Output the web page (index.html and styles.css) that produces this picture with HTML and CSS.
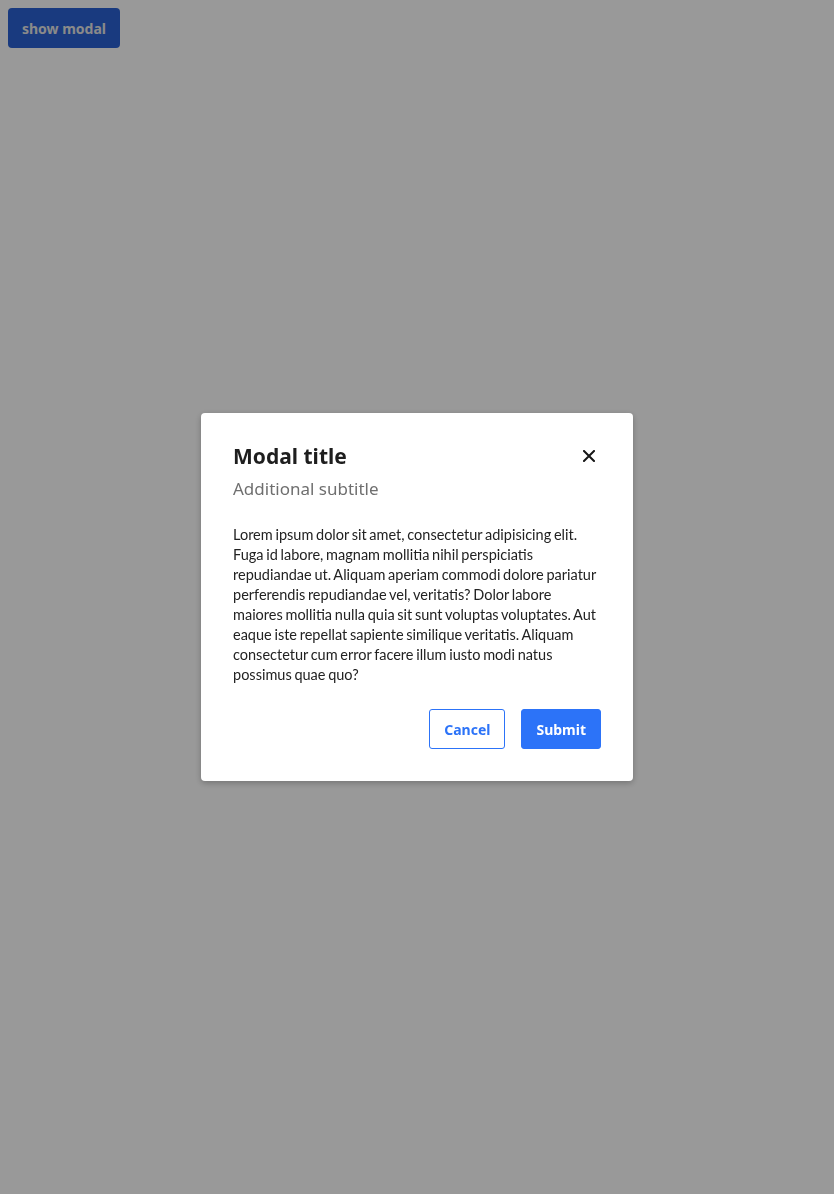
FILE: index.html
```html
<!DOCTYPE html>
<html>
<head>
<meta charset="utf-8">
<link rel="stylesheet" href="styles.css">
</head>
<body>
<button class="show-btn">show modal</button>
<div class="overlay">
  <div class="modal">
    <div class="modal-header">
      <div class="titles">
        <h2 class="modal-title">Modal title</h2>
        <p class="modal-subtitle">Additional subtitle</p>
      </div>
      <button class="close-btn" aria-label="close">
        <svg width="12" height="12" viewBox="0 0 12 12"><path d="M1 1L11 11M11 1L1 11" stroke="#161616" stroke-width="2" stroke-linecap="square"/></svg>
      </button>
    </div>
    <p class="modal-body">Lorem ipsum dolor sit amet, consectetur adipisicing elit. Fuga id labore, magnam mollitia nihil perspiciatis repudiandae ut. Aliquam aperiam commodi dolore pariatur perferendis repudiandae vel, veritatis? Dolor labore maiores mollitia nulla quia sit sunt voluptas voluptates. Aut eaque iste repellat sapiente similique veritatis. Aliquam consectetur cum error facere illum iusto modi natus possimus quae quo?</p>
    <div class="modal-footer">
      <button class="btn btn-outline">Cancel</button>
      <button class="btn btn-primary">Submit</button>
    </div>
  </div>
</div>
</body>
</html>
```
FILE: styles.css
```css
html, body {
  margin: 0;
  padding: 0;
}
body {
  background: #ffffff;
  font-family: "Noto Sans", "DejaVu Sans", sans-serif;
  padding: 8px;
}
.show-btn {
  width: 112px;
  height: 40px;
  border: none;
  border-radius: 4px;
  background: #2a62d4;
  color: #e6e6e6;
  font-family: inherit;
  font-weight: 700;
  font-size: 14px;
}
.overlay {
  position: fixed;
  inset: 0;
  background: rgba(0, 0, 0, 0.4);
  display: flex;
  align-items: center;
  justify-content: center;
}
.modal {
  width: 432px;
  box-sizing: border-box;
  padding: 29px 32px 32px;
  background: #ffffff;
  border-radius: 4px;
  box-shadow: 0 2px 6px rgba(0, 0, 0, 0.25);
}
.modal-header {
  display: flex;
  justify-content: space-between;
  align-items: flex-start;
}
.modal-title {
  margin: 0;
  font-size: 21px;
  line-height: 28px;
  font-weight: 700;
  color: #1e1e1e;
}
.modal-subtitle {
  margin: 7px 0 0;
  font-size: 17px;
  line-height: 24px;
  color: #6f6f6f;
}
.close-btn {
  border: none;
  background: none;
  padding: 0;
  width: 24px;
  height: 24px;
  margin-top: 2px;
  display: flex;
  align-items: center;
  justify-content: center;
}
.modal-body {
  margin: 24px 0 0;
  font-family: "Lato", "Noto Sans", sans-serif;
  font-size: 14.5px;
  line-height: 20px;
  word-spacing: -1px;
  color: #222222;
}
.modal-footer {
  margin-top: 24px;
  display: flex;
  justify-content: flex-end;
  gap: 16px;
}
.btn {
  height: 40px;
  padding: 0 14px;
  border-radius: 3px;
  font-family: inherit;
  font-weight: 700;
  font-size: 14px;
}
.btn-outline {
  background: #ffffff;
  border: 1px solid #2c73f8;
  color: #2c73f8;
}
.btn-primary {
  background: #2c73f8;
  border: 1px solid #2c73f8;
  color: #ffffff;
}
```
